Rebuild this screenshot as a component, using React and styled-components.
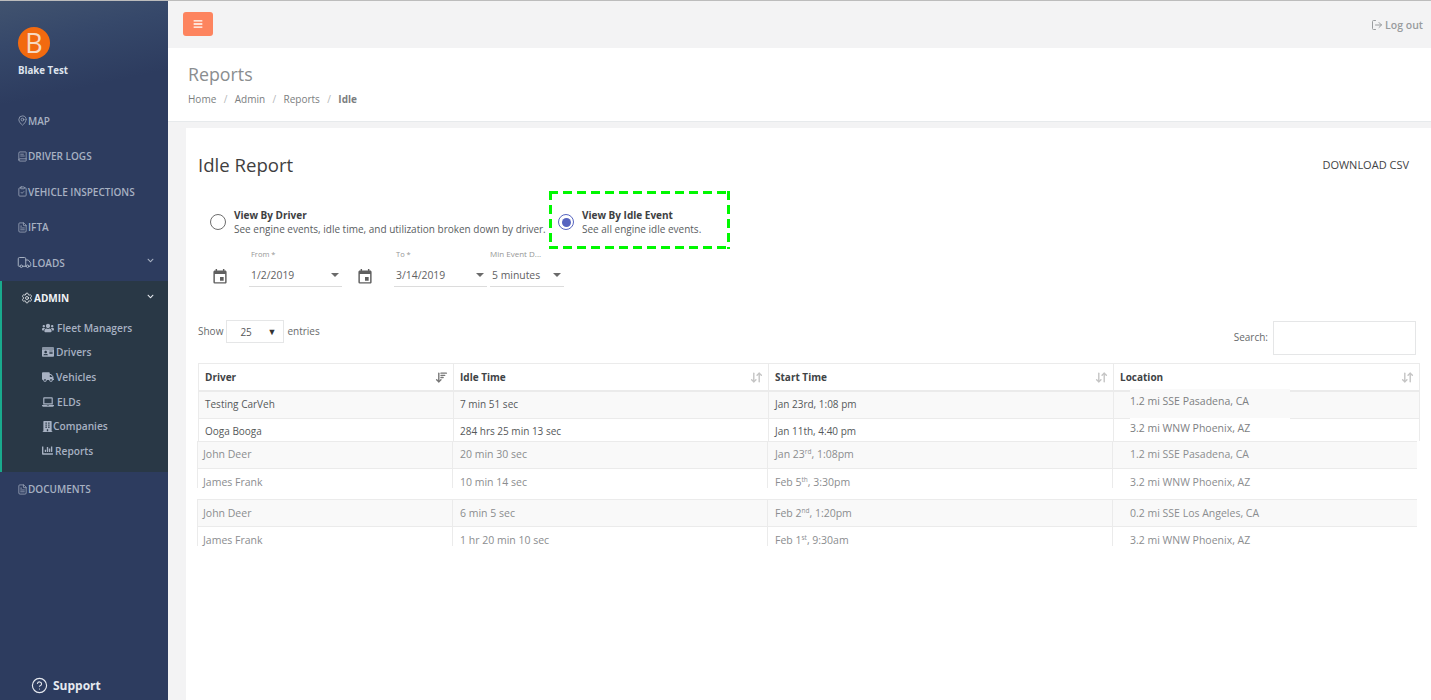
import { Fragment } from 'react';
import styled, { createGlobalStyle } from 'styled-components';
import { FaBars, FaBuilding, FaChartBar, FaChevronDown, FaIdCard, FaLaptop, FaTruck, FaUsers } from 'react-icons/fa';
import { MdEvent } from 'react-icons/md';
import { ArrowDownUp, ArrowDownWideNarrow, BookText, ClipboardCheck, CircleHelp, FileText, LogOut, MapPin, Settings, Truck } from 'lucide-react';

const GlobalStyle = createGlobalStyle`
  html, body {
    margin: 0;
    padding: 0;
    height: 700px;
    overflow: hidden;
    background: #f3f3f4;
    font-family: "Open Sans", "Liberation Sans", sans-serif;
    color: #676a6c;
  }
  * { box-sizing: border-box; }
`;

const mainLinks = [
  { label: 'MAP', icon: MapPin, size: 11 },
  { label: 'DRIVER LOGS', icon: BookText, size: 11 },
  { label: 'VEHICLE INSPECTIONS', icon: ClipboardCheck, size: 11 },
  { label: 'IFTA', icon: FileText, size: 11 },
  { label: 'LOADS', icon: Truck, size: 15, arrow: true },
];

const adminLinks = [
  { label: 'Fleet Managers', icon: FaUsers, size: 12, gap: 3 },
  { label: 'Drivers', icon: FaIdCard, size: 12, gap: 2 },
  { label: 'Vehicles', icon: FaTruck, size: 12, gap: 2 },
  { label: 'ELDs', icon: FaLaptop, size: 12, gap: 3 },
  { label: 'Companies', icon: FaBuilding, size: 11, gap: 0 },
  { label: 'Reports', icon: FaChartBar, size: 11, gap: 2 },
];

const columns = [
  { label: 'Driver', sorted: true },
  { label: 'Idle Time' },
  { label: 'Start Time' },
  { label: 'Location' },
];

const ordinal = (day, suffix) => (
  <>
    {day}
    <sup>{suffix}</sup>
  </>
);

const rows = [
  { height: 27, cells: ['Testing CarVeh', '7 min 51 sec', 'Jan 23rd, 1:08 pm', '1.2 mi SSE Pasadena, CA'], shaded: true, dark: true, top: 5 },
  { height: 23, cells: ['Ooga Booga', '284 hrs 25 min 13 sec', 'Jan 11th, 4:40 pm', '3.2 mi WNW Phoenix, AZ'], dark: true, top: 5 },
  { height: 27, cells: ['John Deer', '20 min 30 sec', <>Jan {ordinal(23, 'rd')}, 1:08pm</>, '1.2 mi SSE Pasadena, CA'], shaded: true, inset: true, top: 5 },
  { height: 20, cells: ['James Frank', '10 min 14 sec', <>Feb {ordinal(5, 'th')}, 3:30pm</>, '3.2 mi WNW Phoenix, AZ'], inset: true, top: 6 },
  { height: 27, cells: ['John Deer', '6 min 5 sec', <>Feb {ordinal(2, 'nd')}, 1:20pm</>, '0.2 mi SSE Los Angeles, CA'], shaded: true, inset: true, gap: 11, top: 6 },
  { height: 20, cells: ['James Frank', '1 hr 20 min 10 sec', <>Feb {ordinal(1, 'st')}, 9:30am</>, '3.2 mi WNW Phoenix, AZ'], inset: true, top: 6 },
];

const App = () => {
  return (
    <>
      <GlobalStyle />
      <Page>
        <Sidebar>
          <Profile>
            <Avatar>B</Avatar>
            <ProfileName>Blake Test</ProfileName>
          </Profile>
          <NavList>
            {mainLinks.map(({ label, icon: Icon, size, arrow }) => (
              <NavItem key={label}>
                <Icon size={size} strokeWidth={1.6} />
                <span>{label}</span>
                {arrow && <NavArrow />}
              </NavItem>
            ))}
          </NavList>
          <AdminGroup>
            <AdminTitle>
              <Settings size={12} strokeWidth={1.6} />
              <span>ADMIN</span>
              <NavArrow $light />
            </AdminTitle>
            {adminLinks.map(({ label, icon: Icon, size, gap }) => (
              <SubItem key={label} $gap={gap}>
                <Icon size={size} />
                <span>{label}</span>
              </SubItem>
            ))}
          </AdminGroup>
          <NavItem>
            <FileText size={11} strokeWidth={1.6} />
            <span>DOCUMENTS</span>
          </NavItem>
          <Support>
            <CircleHelp size={17} strokeWidth={1.6} />
            <span>Support</span>
          </Support>
        </Sidebar>
        <Main>
          <TopBar>
            <MenuButton>
              <FaBars size={10} />
            </MenuButton>
            <LogoutLink>
              <LogOut size={12} />
              <span>Log out</span>
            </LogoutLink>
          </TopBar>
          <Heading>
            <HeadingTitle>Reports</HeadingTitle>
            <Breadcrumb>
              <span>Home</span>
              <Slash>/</Slash>
              <span>Admin</span>
              <Slash>/</Slash>
              <span>Reports</span>
              <Slash>/</Slash>
              <strong>Idle</strong>
            </Breadcrumb>
          </Heading>
          <Panel>
            <PanelHeader>
              <PanelTitle>Idle Report</PanelTitle>
              <DownloadLink>DOWNLOAD CSV</DownloadLink>
            </PanelHeader>
            <Options>
              <Option>
                <Radio />
                <OptionText>
                  <b>View By Driver</b>
                  <span>See engine events, idle time, and utilization broken down by driver.</span>
                </OptionText>
              </Option>
              <HighlightedOption>
                <Radio $checked />
                <OptionText>
                  <b>View By Idle Event</b>
                  <span>See all engine idle events.</span>
                </OptionText>
              </HighlightedOption>
            </Options>
            <Filters>
              <CalendarIcon />
              <Field $width={93} $after={15}>
                <label>From *</label>
                <FieldValue>
                  <span>1/2/2019</span>
                  <Caret />
                </FieldValue>
              </Field>
              <CalendarIcon />
              <Field $width={93} $after={3}>
                <label>To *</label>
                <FieldValue>
                  <span>3/14/2019</span>
                  <Caret />
                </FieldValue>
              </Field>
              <Field $width={74} $compact>
                <label>Min Event D...</label>
                <FieldValue>
                  <span>5 minutes</span>
                  <Caret />
                </FieldValue>
              </Field>
            </Filters>
            <TableControls>
              <ShowEntries>
                <span>Show</span>
                <EntriesSelect>
                  <span>25</span>
                  <i>▼</i>
                </EntriesSelect>
                <span>entries</span>
              </ShowEntries>
              <SearchBox>
                <span>Search:</span>
                <SearchInput />
              </SearchBox>
            </TableControls>
            <Table>
              <HeaderRow>
                {columns.map(({ label, sorted }) => (
                  <HeaderCell key={label}>
                    <span>{label}</span>
                    {sorted ? (
                      <ArrowDownWideNarrow size={13} color="#777" strokeWidth={2.6} />
                    ) : (
                      <ArrowDownUp size={13} color="#c4c4c4" strokeWidth={2.6} />
                    )}
                  </HeaderCell>
                ))}
              </HeaderRow>
              {rows.map((row, index) => (
                <Fragment key={index}>
                  {row.gap && <RowGap $height={row.gap} />}
                  <Row $height={row.height} $shaded={row.shaded} $dark={row.dark} $inset={row.inset}>
                    {row.cells.map((cell, i) =>
                      i === 3 && row.dark ? (
                        <PatchedCell key={i} $first={index === 0} $shaded={row.shaded}>
                          <span>{cell}</span>
                        </PatchedCell>
                      ) : (
                        <Cell key={i} $top={row.top} $first={i === 0} $inset={row.inset} $location={i === 3}>
                          {cell}
                        </Cell>
                      )
                    )}
                  </Row>
                </Fragment>
              ))}
            </Table>
          </Panel>
        </Main>
      </Page>
    </>
  );
};

export default App;

const Page = styled.div`
  display: flex;
  width: 1431px;
  height: 700px;
  border-top: 1px solid #bcbcbc;
  overflow: hidden;
`;

const Sidebar = styled.aside`
  position: relative;
  flex: 0 0 168px;
  background: linear-gradient(168deg, #41536f 0, #36486a 45px, #2d3c5f 102px);
`;

const Profile = styled.div`
  height: 102px;
  padding: 26px 0 0 18px;
`;

const Avatar = styled.div`
  width: 32px;
  height: 32px;
  border-radius: 50%;
  background: #f26a0f;
  color: #f7d9c2;
  font-size: 27px;
  line-height: 32px;
  text-align: center;
`;

const ProfileName = styled.div`
  margin-top: 5px;
  color: #dfe4ee;
  font-size: 9.7px;
  font-weight: 700;
  line-height: 14px;
`;

const NavList = styled.nav`
  padding-top: 0;
`;

const NavItem = styled.div`
  position: relative;
  display: flex;
  align-items: center;
  gap: 0;
  height: 35.5px;
  padding-left: 17px;
  color: #a7b1c2;
  font-size: 10px;
  font-weight: 600;
`;

const NavArrow = styled(FaChevronDown)`
  position: absolute;
  right: 14px;
  top: 12px;
  width: 7px;
  height: 7px;
  color: ${({ $light }) => ($light ? '#e8ebf0' : '#a7b1c2')};
`;

const AdminGroup = styled.div`
  height: 191px;
  border-left: 2px solid #19aa8d;
  background: #293846;
`;

const AdminTitle = styled.div`
  position: relative;
  display: flex;
  align-items: center;
  gap: 1px;
  height: 35px;
  padding-left: 19px;
  color: #f0f2f5;
  font-size: 10px;
  font-weight: 700;
`;

const SubItem = styled.div`
  display: flex;
  align-items: center;
  gap: ${({ $gap }) => $gap}px;
  height: 24.6px;
  padding-left: 40px;
  color: #a7b1c2;
  font-size: 10.2px;
  font-weight: 600;
`;

const Support = styled.div`
  position: absolute;
  left: 31px;
  bottom: 6px;
  display: flex;
  align-items: center;
  gap: 5px;
  color: #e6e9ef;
  font-size: 12px;
  font-weight: 700;
`;

const Main = styled.main`
  flex: 1;
  min-width: 0;
`;

const TopBar = styled.header`
  display: flex;
  align-items: center;
  justify-content: space-between;
  height: 47px;
  padding: 0 8px 0 15px;
  background: #f3f3f4;
`;

const MenuButton = styled.button`
  display: flex;
  align-items: center;
  justify-content: center;
  width: 30px;
  height: 24px;
  margin-bottom: 2px;
  border: none;
  border-radius: 3px;
  background: #fd845f;
  color: #fff;
`;

const LogoutLink = styled.div`
  display: flex;
  align-items: center;
  gap: 2px;
  color: #999c9e;
  font-size: 10.5px;
  font-weight: 600;
`;

const Heading = styled.section`
  height: 74px;
  padding: 14px 0 0 20px;
  background: #fff;
  border-bottom: 1px solid #e7eaec;
`;

const HeadingTitle = styled.h2`
  margin: 0;
  color: #8a8d8f;
  font-size: 17.8px;
  font-weight: 400;
  line-height: 25px;
`;

const Breadcrumb = styled.div`
  margin-top: 5px;
  color: #7b7e80;
  font-size: 10px;
  line-height: 14px;
  strong { font-weight: 700; }
`;

const Slash = styled.span`
  margin: 0 7.4px;
  color: #b5b7b9;
`;

const Panel = styled.section`
  height: 572px;
  margin: 6px 0 0 18px;
  padding: 0 12px;
  background: #fff;
`;

const PanelHeader = styled.div`
  display: flex;
  align-items: center;
  justify-content: space-between;
  height: 63px;
  padding: 10px 10px 0 0;
`;

const PanelTitle = styled.h1`
  margin: 0;
  color: #3f3f3f;
  font-size: 18.6px;
  font-weight: 400;
`;

const DownloadLink = styled.div`
  color: #3f4446;
  font-size: 11px;
`;

const Options = styled.div`
  display: flex;
  align-items: center;
  height: 58px;
  padding-left: 12px;
`;

const Option = styled.div`
  display: flex;
  align-items: center;
  gap: 8px;
  width: 339px;
  padding-top: 4px;
`;

const HighlightedOption = styled(Option)`
  width: 181px;
  height: 58px;
  padding-left: 9px;
  background:
    linear-gradient(90deg, #00f800 9px, transparent 9px) top left / 14px 3px repeat-x,
    linear-gradient(90deg, #00f800 9px, transparent 9px) bottom left / 14px 3px repeat-x,
    linear-gradient(#00f800 9px, transparent 9px) top left / 3px 14px repeat-y,
    linear-gradient(#00f800 9px, transparent 9px) top right / 3px 14px repeat-y;
`;

const Radio = styled.span`
  position: relative;
  flex: 0 0 16px;
  width: 16px;
  height: 16px;
  border-radius: 50%;
  border: 1.5px solid ${({ $checked }) => ($checked ? '#5664c0' : '#6e6e6e')};
  &::after {
    content: '';
    display: ${({ $checked }) => ($checked ? 'block' : 'none')};
    position: absolute;
    inset: 2.5px;
    border-radius: 50%;
    background: #5664c0;
  }
`;

const OptionText = styled.div`
  display: flex;
  flex-direction: column;
  color: #5a5d5f;
  font-size: 10px;
  line-height: 14px;
  white-space: nowrap;
  b { color: #3d4042; font-weight: 700; }
`;

const Filters = styled.div`
  display: flex;
  align-items: flex-end;
  height: 38px;
  padding-left: 14px;
`;

const CalendarIcon = styled(MdEvent)`
  flex: 0 0 16px;
  width: 16px;
  height: 16px;
  margin: 0 21px 2px 0;
  color: #5f5f5f;
  transform: scale(1.1);
`;

const Field = styled.div`
  flex: 0 0 ${({ $width }) => $width}px;
  width: ${({ $width }) => $width}px;
  margin-right: ${({ $after }) => $after ?? 0}px;
  label {
    display: block;
    margin-bottom: 5px;
    padding-left: ${({ $compact }) => ($compact ? 0 : '2px')};
    color: #969696;
    font-size: ${({ $compact }) => ($compact ? '8px' : '7.5px')};
    line-height: 12px;
  }
`;

const FieldValue = styled.div`
  display: flex;
  align-items: center;
  justify-content: space-between;
  height: 22px;
  padding: 0 2px 2px;
  border-bottom: 1px solid #dcdcdc;
  color: #5f6163;
  font-size: 10.4px;
`;

const Caret = styled.i`
  width: 0;
  height: 0;
  margin-right: 1px;
  border-left: 4px solid transparent;
  border-right: 4px solid transparent;
  border-top: 4px solid #6a6a6a;
`;

const TableControls = styled.div`
  display: flex;
  justify-content: space-between;
  height: 76px;
  padding: 34px 3px 0 0;
  align-items: flex-start;
`;

const ShowEntries = styled.div`
  display: flex;
  align-items: center;
  gap: 3px;
  margin-top: -1px;
  color: #676a6c;
  font-size: 10px;
  span { margin-bottom: 2px; }
`;

const EntriesSelect = styled.div`
  display: flex;
  align-items: center;
  justify-content: space-between;
  width: 58px;
  height: 23px;
  padding: 0 7px 0 13px;
  border: 1px solid #e5e6e7;
  span { margin: 1px 0 0; color: #55585a; }
  i { color: #333; font-size: 9px; font-style: normal; }
`;

const SearchBox = styled.div`
  display: flex;
  align-items: center;
  gap: 5px;
  color: #676a6c;
  font-size: 10px;
  span { margin-bottom: 2px; }
`;

const SearchInput = styled.div`
  width: 143px;
  height: 34px;
  border: 1px solid #e5e6e7;
`;

const Table = styled.div`
  width: 1222px;
`;

const gridColumns = '255px 315px 345px 307px';

const HeaderRow = styled.div`
  display: grid;
  grid-template-columns: ${gridColumns};
  height: 28px;
  border: 1px solid #ebebeb;
  border-width: 1px 0;
`;

const HeaderCell = styled.div`
  display: flex;
  align-items: center;
  justify-content: space-between;
  padding: 0 5px 0 6px;
  border-left: 1px solid #ebebeb;
  color: #404345;
  font-size: 10px;
  font-weight: 700;
  &:last-child { border-right: 1px solid #ebebeb; }
`;

const RowGap = styled.div`
  height: ${({ $height }) => $height}px;
`;

const Row = styled.div`
  display: grid;
  grid-template-columns: ${gridColumns};
  height: ${({ $height }) => $height}px;
  overflow: ${({ $dark }) => ($dark ? 'visible' : 'hidden')};
  background: ${({ $shaded }) => ($shaded ? '#f9f9f9' : '#fff')};
  border-top: 1px solid #ebebeb;
  color: ${({ $dark }) => ($dark ? '#55585a' : '#8b8d8f')};
  font-size: ${({ $inset }) => ($inset ? '10.5px' : '10px')};
  width: ${({ $inset }) => ($inset ? '1220px' : 'auto')};
  margin-left: ${({ $inset }) => ($inset ? '-1px' : 0)};
  sup { font-size: 6.5px; line-height: 0; }
`;

const Cell = styled.div`
  padding: ${({ $top }) => $top}px 0 0
    ${({ $location, $first, $inset }) => {
      if ($location) return '17px';
      if (!$inset) return '6px';
      return $first ? '5px' : '7px';
    }};
  border-left: 1px solid #ebebeb;
  line-height: 15px;
  white-space: nowrap;
`;

/* the first two location cells sit on a lighter patch that hides the row lines */
const PatchedCell = styled.div`
  position: relative;
  border-left: 1px solid #ebebeb;
  border-right: 1px solid #ebebeb;
  line-height: 15px;
  white-space: nowrap;
  color: #7d8082;
  &::before {
    content: '';
    position: absolute;
    left: 16px;
    top: ${({ $first }) => ($first ? '-3px' : '-1px')};
    bottom: 0;
    width: 160px;
    background: ${({ $shaded }) => ($shaded ? '#f9f9f9' : '#fff')};
  }
  span {
    position: relative;
    display: block;
    padding: 2px 0 0 16px;
    font-size: 10.5px;
  }
`;
